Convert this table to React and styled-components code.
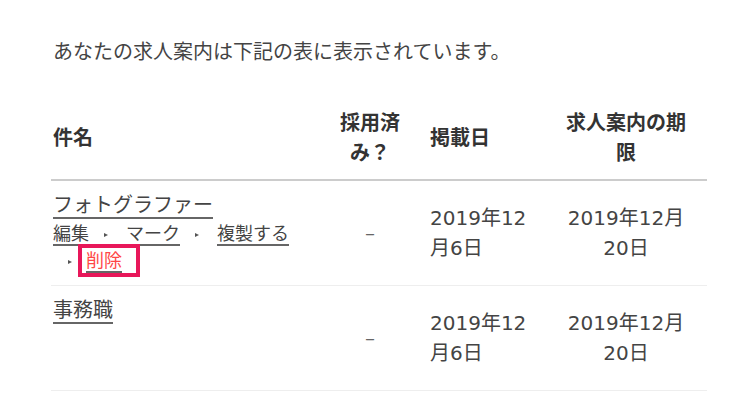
import React from 'react'
import styled, { createGlobalStyle } from 'styled-components'

const GlobalStyle = createGlobalStyle`
    html, body {
        margin: 0;
        padding: 0;
        background: #fff;
    }
    body {
        font-family: "DejaVu Sans", "Noto Sans CJK JP", sans-serif;
        color: #444;
    }
`

const Page = styled.div`
    width: 656px;
    padding: 37px 0 0 51px;
`

const Intro = styled.p`
    margin: 0 0 30px;
    padding-left: 2px;
    font-size: 20px;
    line-height: 30px;
    color: #444;
`

const Table = styled.table`
    width: 656px;
    table-layout: fixed;
    border-collapse: collapse;
`

const Th = styled.th`
    box-sizing: border-box;
    width: ${p => p.$w}px;
    padding: ${p => p.$pad};
    text-align: ${p => p.$align || 'left'};
    vertical-align: middle;
    font-size: 20px;
    line-height: 30px;
    font-weight: bold;
    color: #333;
    border-bottom: 2px solid #ccc;
`

const Row = styled.tr`
    border-bottom: 1px solid #eee;
`

const Td = styled.td`
    box-sizing: border-box;
    padding: ${p => p.$pad};
    text-align: ${p => p.$align || 'left'};
    vertical-align: middle;
    font-size: 20px;
    line-height: 30px;
    color: #444;
`

const Title = styled.a`
    color: #444;
    text-decoration: none;
    border-bottom: 2px solid #666;
`

const Actions = styled.div`
    font-size: 18px;
    line-height: 27px;
    visibility: ${p => p.$hidden ? 'hidden' : 'visible'};
`

const Action = styled.span`
    white-space: nowrap;
`

const Sep = styled.span`
    display: inline-block;
    width: 0;
    height: 0;
    margin: 0 18px 1px 15px;
    border-top: 2.5px solid transparent;
    border-bottom: 2.5px solid transparent;
    border-left: 4px solid #555;
    vertical-align: middle;
`

const ActionLink = styled.a`
    color: ${p => p.$danger ? '#ff4747' : '#444'};
    text-decoration: none;
    border-bottom: 2px solid #666;
`

const Focus = styled.span`
    display: inline-block;
    line-height: 25px;
    padding: 0 14px 0 4px;
    margin-left: -8px;
    outline: 4px solid #e8175a;
`

const Dash = styled.span`
    color: #666;
`

const jobs = [
    { title: 'フォトグラファー', showActions: true, posted: '2019年12月6日', deadline: '2019年12月20日' },
    { title: '事務職', showActions: false, posted: '2019年12月6日', deadline: '2019年12月20日' },
]

function RowActions({ hidden }) {
    return (
        <Actions $hidden={hidden}>
            <Action><ActionLink>編集</ActionLink></Action>
            <Action><Sep /><ActionLink>マーク</ActionLink></Action>
            <Action><Sep /><ActionLink>複製する</ActionLink></Action>
            <Action><Sep /><Focus><ActionLink $danger>削除</ActionLink></Focus></Action>
        </Actions>
    )
}

export default function App() {
    return (
        <>
            <GlobalStyle />
            <Page>
                <Intro>あなたの求人案内は下記の表に表示されています。</Intro>
                <Table>
                    <thead>
                        <tr>
                            <Th $w={279} $pad="11px 10px 11px 2px">件名</Th>
                            <Th $w={80} $pad="11px 5px" $align="center">採用済み？</Th>
                            <Th $w={135} $pad="11px 10px 11px 20px">掲載日</Th>
                            <Th $w={162} $pad="11px 19px" $align="center">求人案内の期限</Th>
                        </tr>
                    </thead>
                    <tbody>
                        {jobs.map((job, i) => (
                            <Row key={i}>
                                <Td $pad="9px 10px 11px 2px">
                                    <div><Title>{job.title}</Title></div>
                                    <RowActions hidden={!job.showActions} />
                                </Td>
                                <Td $pad="0 5px" $align="center"><Dash>–</Dash></Td>
                                <Td $pad="0 10px 0 20px">{job.posted}</Td>
                                <Td $pad="0 19px" $align="center">{job.deadline}</Td>
                            </Row>
                        ))}
                    </tbody>
                </Table>
            </Page>
        </>
    )
}
